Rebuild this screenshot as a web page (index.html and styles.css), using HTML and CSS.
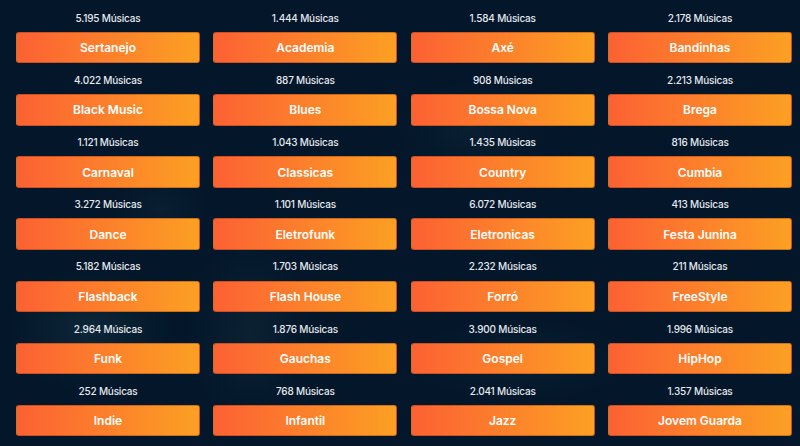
FILE: index.html
```html
<!DOCTYPE html>
<html lang="pt-BR">
<head>
<meta charset="utf-8">
<title>Gêneros</title>
<link rel="stylesheet" href="styles.css">
</head>
<body>
<main class="genres">
  <div class="cell"><p class="count">5.195 Músicas</p><a class="btn">Sertanejo</a></div>
  <div class="cell"><p class="count">1.444 Músicas</p><a class="btn">Academia</a></div>
  <div class="cell"><p class="count">1.584 Músicas</p><a class="btn">Axé</a></div>
  <div class="cell"><p class="count">2.178 Músicas</p><a class="btn">Bandinhas</a></div>

  <div class="cell"><p class="count">4.022 Músicas</p><a class="btn">Black Music</a></div>
  <div class="cell"><p class="count">887 Músicas</p><a class="btn">Blues</a></div>
  <div class="cell"><p class="count">908 Músicas</p><a class="btn">Bossa Nova</a></div>
  <div class="cell"><p class="count">2.213 Músicas</p><a class="btn">Brega</a></div>

  <div class="cell"><p class="count">1.121 Músicas</p><a class="btn">Carnaval</a></div>
  <div class="cell"><p class="count">1.043 Músicas</p><a class="btn">Classicas</a></div>
  <div class="cell"><p class="count">1.435 Músicas</p><a class="btn">Country</a></div>
  <div class="cell"><p class="count">816 Músicas</p><a class="btn">Cumbia</a></div>

  <div class="cell"><p class="count">3.272 Músicas</p><a class="btn">Dance</a></div>
  <div class="cell"><p class="count">1.101 Músicas</p><a class="btn">Eletrofunk</a></div>
  <div class="cell"><p class="count">6.072 Músicas</p><a class="btn">Eletronicas</a></div>
  <div class="cell"><p class="count">413 Músicas</p><a class="btn">Festa Junina</a></div>

  <div class="cell"><p class="count">5.182 Músicas</p><a class="btn">Flashback</a></div>
  <div class="cell"><p class="count">1.703 Músicas</p><a class="btn">Flash House</a></div>
  <div class="cell"><p class="count">2.232 Músicas</p><a class="btn">Forró</a></div>
  <div class="cell"><p class="count">211 Músicas</p><a class="btn">FreeStyle</a></div>

  <div class="cell"><p class="count">2.964 Músicas</p><a class="btn">Funk</a></div>
  <div class="cell"><p class="count">1.876 Músicas</p><a class="btn">Gauchas</a></div>
  <div class="cell"><p class="count">3.900 Músicas</p><a class="btn">Gospel</a></div>
  <div class="cell"><p class="count">1.996 Músicas</p><a class="btn">HipHop</a></div>

  <div class="cell"><p class="count">252 Músicas</p><a class="btn">Indie</a></div>
  <div class="cell"><p class="count">768 Músicas</p><a class="btn">Infantil</a></div>
  <div class="cell"><p class="count">2.041 Músicas</p><a class="btn">Jazz</a></div>
  <div class="cell"><p class="count">1.357 Músicas</p><a class="btn">Jovem Guarda</a></div>
</main>
</body>
</html>
```

FILE: styles.css
```css
html, body {
  margin: 0;
  padding: 0;
  height: 446px;
  overflow: hidden;
}

body {
  background-color: #03162a;
  background-image:
    radial-gradient(ellipse 120px 90px at 90px 330px, rgba(30, 70, 80, 0.35), transparent 70%),
    radial-gradient(ellipse 90px 140px at 250px 330px, rgba(30, 60, 70, 0.30), transparent 70%),
    radial-gradient(ellipse 110px 70px at 470px 130px, rgba(25, 55, 70, 0.25), transparent 70%),
    radial-gradient(ellipse 70px 60px at 160px 210px, rgba(30, 55, 70, 0.25), transparent 70%),
    radial-gradient(ellipse 160px 60px at 520px 360px, rgba(25, 60, 70, 0.25), transparent 70%);
  font-family: "Inter", "Liberation Sans", sans-serif;
  color: #fff;
}

.genres {
  display: grid;
  grid-template-columns: repeat(4, 184px);
  column-gap: 13.33px;
  padding: 1.3px 8px 0 16px;
}

.cell {
  display: flex;
  flex-direction: column;
  align-items: stretch;
  height: 62.17px;
}

.count {
  margin: 0;
  height: 30.67px;
  box-sizing: border-box;
  padding-top: 9.5px;
  line-height: 14px;
  font-size: 10px;
  font-weight: 500;
  letter-spacing: -0.2px;
  text-align: center;
  color: #e6e9ee;
}

.btn {
  display: flex;
  align-items: center;
  justify-content: center;
  height: 31.5px;
  box-sizing: border-box;
  border: 1px solid rgba(120, 40, 10, 0.35);
  border-radius: 3px;
  background: linear-gradient(90deg, #fc6133 0%, #fc7d2c 45%, #fca023 100%);
  font-size: 12px;
  font-weight: 600;
  color: #fff;
  text-decoration: none;
}
```
